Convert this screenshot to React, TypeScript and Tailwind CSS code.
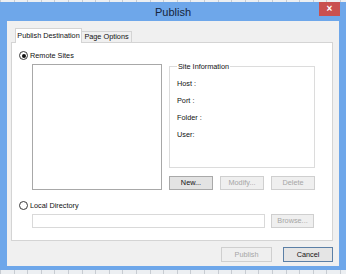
import React from "react";

const font = { fontFamily: '"Liberation Sans", Arial, sans-serif' };

function Radio({ checked, label }: { checked?: boolean; label: string }) {
  return (
    <div className="flex items-center h-[9px] gap-[2px]">
      <div className="w-[9px] h-[9px] rounded-full border border-[#3a3a3a] bg-white flex items-center justify-center">
        {checked && <div className="w-[4px] h-[4px] rounded-full bg-[#111]" />}
      </div>
      <span className="text-[7.3px] leading-[9px] text-[#111]">{label}</span>
    </div>
  );
}

function Btn({ label, disabled, def, w }: { label: string; disabled?: boolean; def?: boolean; w: string }) {
  const base = "flex items-center justify-center text-[7.3px] leading-none border";
  const cls = disabled
    ? "bg-[#efefef] border-[#cfcfcf] text-[#a6a6a6]"
    : def
    ? "bg-[#e5e5e5] border-[#5b7fa6] text-[#111]"
    : "bg-[#e3e3e3] border-[#a9a9a9] text-[#111]";
  return <div className={`${base} ${cls} ${w}`}>{label}</div>;
}

export default function App() {
  return (
    <div
      style={font}
      className="w-[346px] h-[274px] pt-[2px] bg-[repeating-linear-gradient(90deg,#c7ccd2_0_1px,#eceff2_1px_13.6px)]"
    >
      <div className="h-[268px] bg-[#6ea7ea] flex flex-col">
        {/* Title bar */}
        <div className="h-[19px] grid grid-cols-[1fr_auto_1fr]">
          <div />
          <div className="text-[11px] leading-[19px] text-[#15243a] pt-[1px]">Publish</div>
          <div className="flex justify-end pr-[6px]">
            <div className="w-[21px] h-[14px] bg-[#c9504f] flex items-center justify-center text-white text-[10px] leading-none font-bold">
              ×
            </div>
          </div>
        </div>

        {/* Client */}
        <div className="mx-[7px] h-[245px] bg-[#f0f0f0] flex flex-col">
          {/* Tabs */}
          <div className="flex items-end pl-[8px] pt-[7px] h-[21px] relative z-10">
            <div className="h-[15px] w-[67px] bg-white border border-b-0 border-[#d4d4d4] text-[7.3px] text-[#111] flex items-center justify-center -mb-[1px]">
              Publish Destination
            </div>
            <div className="h-[11px] w-[50px] bg-[#f0f0f0] border border-l-0 border-b-0 border-[#d4d4d4] text-[7.3px] text-[#111] flex items-center justify-center">
              Page Options
            </div>
          </div>

          {/* Panel */}
          <div className="ml-[4px] w-[322px] h-[199px] bg-white border border-[#d4d4d4] flex flex-col pl-[7px] pt-[8px]">
            <Radio checked label="Remote Sites" />
            <div className="flex mt-[4px] pl-[13px]">
              <div className="w-[130px] h-[126px] border border-[#a8a8a8] bg-white" />
              <div className="ml-[7px] flex flex-col">
                <div className="mt-[2px] w-[146px] h-[102px] border border-[#dcdcdc] flex flex-col">
                  <span className="-mt-[5px] ml-[7px] px-[1px] self-start bg-white text-[7.3px] leading-[9px] text-[#111]">
                    Site Information
                  </span>
                  <div className="mt-[4px] pl-[7px] flex flex-col">
                    {["Host :", "Port :", "Folder :", "User:"].map((l) => (
                      <div key={l} className="h-[17px] leading-[17px] text-[7.3px] text-[#111]">
                        {l}
                      </div>
                    ))}
                  </div>
                </div>
                <div className="mt-[8px] flex gap-[7px] h-[14px]">
                  <Btn label="New..." w="w-[44px]" />
                  <Btn label="Modify..." disabled w="w-[44px]" />
                  <Btn label="Delete" disabled w="w-[44px]" />
                </div>
              </div>
            </div>
            <div className="mt-[11px]">
              <Radio label="Local Directory" />
            </div>
            <div className="flex mt-[4px] pl-[13px] h-[14px]">
              <div className="w-[233px] h-[14px] border border-[#d9d9d9] bg-white" />
              <div className="ml-[6px] flex">
                <Btn label="Browse..." disabled w="w-[43px]" />
              </div>
            </div>
          </div>

          {/* Footer */}
          <div className="flex justify-end gap-[11px] pr-[6px] mt-[6px] h-[15px]">
            <Btn label="Publish" disabled w="w-[51px]" />
            <Btn label="Cancel" def w="w-[50px]" />
          </div>
        </div>
      </div>
    </div>
  );
}
